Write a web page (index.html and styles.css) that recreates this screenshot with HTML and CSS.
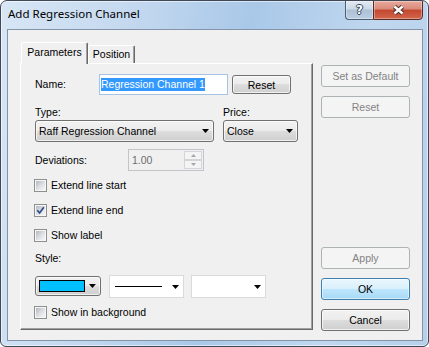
FILE: index.html
```html
<!DOCTYPE html>
<html>
<head>
<meta charset="utf-8">
<title>Add Regression Channel</title>
<link rel="stylesheet" href="styles.css">
</head>
<body>
<div class="window">
  <div class="titlebar">
    <div class="title">Add Regression Channel</div>
    <div class="caption-btns">
      <div class="cbtn help">?</div>
      <div class="cbtn close">
        <svg width="13" height="10" viewBox="0 0 13 10"><path d="M2.5 1.5L10.5 8.5M10.5 1.5L2.5 8.5" stroke="#4a2a24" stroke-width="4.4"/><path d="M2.5 1.5L10.5 8.5M10.5 1.5L2.5 8.5" stroke="#fff" stroke-width="2.4"/></svg>
      </div>
    </div>
  </div>
  <div class="client">
    <div class="main">
      <div class="tabs">
        <div class="tab active">Parameters</div>
        <div class="tab inactive">Position</div>
      </div>
      <div class="panel">
        <div class="row r-name">
          <span class="lbl l-name">Name:</span>
          <div class="textbox"><span class="sel">Regression Channel 1</span></div>
          <div class="btn b-reset">Reset</div>
        </div>
        <div class="grid-type">
          <span class="lbl">Type:</span>
          <span class="lbl">Price:</span>
          <div class="combo"><span class="ctext">Raff Regression Channel</span><svg width="7" height="4" viewBox="0 0 7 4"><path d="M0 0H7L3.5 4Z"/></svg></div>
          <div class="combo"><span class="ctext">Close</span><svg width="7" height="4" viewBox="0 0 7 4"><path d="M0 0H7L3.5 4Z"/></svg></div>
        </div>
        <div class="row r-dev">
          <span class="lbl l-dev">Deviations:</span>
          <div class="spin">
            <span class="val">1.00</span>
            <div class="spin-btns">
              <div class="sbtn"><svg width="5" height="3" viewBox="0 0 5 3"><path d="M0 3H5L2.5 0Z"/></svg></div>
              <div class="sbtn"><svg width="5" height="3" viewBox="0 0 5 3"><path d="M0 0H5L2.5 3Z"/></svg></div>
            </div>
          </div>
        </div>
        <div class="row chk r-c1"><span class="cb"><span class="cb-in"></span></span><span class="lbl">Extend line start</span></div>
        <div class="row chk r-c2"><span class="cb"><svg class="cb-in" viewBox="0 0 9 9"><path d="M1.3 4.3L3.6 7L7.8 1.2" fill="none" stroke="#2d4a8c" stroke-width="1.7"/></svg></span><span class="lbl">Extend line end</span></div>
        <div class="row chk r-c3"><span class="cb"><span class="cb-in"></span></span><span class="lbl">Show label</span></div>
        <div class="lbl r-style">Style:</div>
        <div class="row r-styles">
          <div class="combo c-color"><span class="swatch"></span><svg width="7" height="4" viewBox="0 0 7 4"><path d="M0 0H7L3.5 4Z"/></svg></div>
          <div class="lcombo"><span class="line"></span><svg width="7" height="4" viewBox="0 0 7 4"><path d="M0 0H7L3.5 4Z"/></svg></div>
          <div class="lcombo"><span class="blank"></span><svg width="7" height="4" viewBox="0 0 7 4"><path d="M0 0H7L3.5 4Z"/></svg></div>
        </div>
        <div class="row chk r-c4"><span class="cb"><span class="cb-in"></span></span><span class="lbl">Show in background</span></div>
      </div>
    </div>
    <div class="side">
      <div class="btn disabled">Set as Default</div>
      <div class="btn disabled s-gap">Reset</div>
      <div class="btn disabled s-apply">Apply</div>
      <div class="btn default s-gap">OK</div>
      <div class="btn s-gap">Cancel</div>
    </div>
  </div>
</div>
</body>
</html>
```
FILE: styles.css
```css
* { box-sizing: border-box; }
html, body { margin: 0; padding: 0; background: #fff; }
body {
  width: 429px; height: 347px; overflow: hidden;
  font-family: "Liberation Sans", Arial, sans-serif;
  font-size: 10.5px; color: #000;
}
.window {
  width: 429px; height: 347px;
  border: 1px solid #3e4857;
  border-radius: 7px 7px 6px 6px;
  background: linear-gradient(100deg, #d8e6f5 0%, #c3d8ef 28%, #a9c8e8 52%, #c0d7ef 78%, #b6d0eb 100%);
  box-shadow: inset 0 0 0 1px rgba(255,255,255,0.55);
  display: flex; flex-direction: column;
  overflow: hidden;
}
.titlebar {
  height: 28px; flex-shrink: 0;
  display: flex; justify-content: space-between; align-items: flex-start;
}
.title {
  font-family: "Noto Sans", "Liberation Sans", sans-serif;
  font-size: 11.5px; line-height: 16px;
  padding: 5px 0 0 7px;
}
.caption-btns { display: flex; margin: -1px 5px 0 0; }
.cbtn {
  height: 20px; display: flex; align-items: center; justify-content: center;
  border: 1px solid #4d5e72;
  box-shadow: inset 0 0 0 1px rgba(255,255,255,0.35);
}
.help {
  width: 28px; border-right: none; border-radius: 0 0 0 4px;
  background: linear-gradient(#e2eaf3 0%, #cbd8e6 45%, #acc0d6 50%, #bccee1 100%);
  color: #fff; font-family: "DejaVu Sans", sans-serif; font-weight: bold; font-size: 12px;
  text-shadow: 1px 0 #33475e, -1px 0 #33475e, 0 1px #33475e, 0 -1px #33475e;
}
.close {
  width: 50px; border-radius: 0 0 4px 0; border-color: #5a2b25;
  background: linear-gradient(#e7aa9d 0%, #d98a79 45%, #c4472f 50%, #d2664c 100%);
}
.client {
  flex: 1;
  margin: 0 5px 5px 6px;
  border: 1px solid #8394a8;
  background: #f0f0f0;
  display: flex;
}
.main {
  width: 305px;
  padding: 12px 0 10px 12px;
  display: flex; flex-direction: column;
}
.tabs { height: 21px; display: flex; align-items: flex-end; padding-left: 1px; }
.tab {
  border: 1px solid; border-bottom: none;
  border-color: #fff #696969 transparent #fff;
  border-radius: 2px 2px 0 0;
  box-shadow: inset -1px 0 0 #a0a0a0;
  text-align: center;
  background: #f0f0f0;
}
.tab.active { width: 67px; height: 22px; line-height: 19px; margin-bottom: -1px; position: relative; z-index: 1; }
.tab.inactive { width: 47px; height: 18px; line-height: 17px; }
.panel {
  width: 293px; height: 267px;
  border: 1px solid; border-color: #fff #696969 #696969 #fff;
  box-shadow: inset -1px -1px 0 #a0a0a0;
  padding: 10px 0 0 14px;
  display: flex; flex-direction: column; align-items: flex-start;
}
.lbl { line-height: 13px; white-space: nowrap; }
.row { display: flex; align-items: center; }
.l-name { width: 64px; }
.textbox {
  width: 129px; height: 21px; padding: 0 1px;
  border: 1px solid #a7c3e3; background: #fff;
  display: flex; align-items: center;
}
.sel { background: #3399ff; color: #fff; line-height: 13px; }
.btn {
  height: 22px;
  border: 1px solid #707070; border-radius: 3px;
  background: linear-gradient(#f2f2f2 0%, #ebebeb 50%, #dddddd 50%, #cfcfcf 100%);
  box-shadow: inset 0 0 0 1px rgba(255,255,255,0.7);
  display: flex; align-items: center; justify-content: center;
}
.b-reset { width: 59px; height: 19px; margin-left: 4px; }
.btn.disabled { border-color: #adb2b5; background: #f4f4f4; color: #838383; box-shadow: none; }
.btn.default {
  border-color: #3c7fb1;
  background: linear-gradient(#eaf6fd 0%, #d9f0fc 50%, #bee6fd 50%, #a7d9f5 100%);
  box-shadow: inset 0 0 0 1px rgba(255,255,255,0.5);
}
.grid-type {
  margin-top: 11px;
  display: grid; grid-template-columns: 179px 75px; column-gap: 9px; row-gap: 1px;
}
.combo {
  height: 22px;
  border: 1px solid #707070; border-radius: 3px;
  background: linear-gradient(#f2f2f2 0%, #ebebeb 50%, #dddddd 50%, #cfcfcf 100%);
  box-shadow: inset 0 0 0 1px rgba(255,255,255,0.7);
  display: flex; align-items: center; padding: 0 4px 0 3px;
}
.ctext { flex: 1; white-space: nowrap; }
.r-dev { margin-top: 7px; }
.l-dev { width: 93px; }
.spin {
  width: 76px; height: 22px;
  border: 1px solid #c2c4c7; background: #f0f0f0;
  display: flex; padding: 1px;
}
.val { flex: 1; color: #6d6d6d; padding-left: 2px; line-height: 18px; }
.spin-btns { width: 18px; display: flex; flex-direction: column; }
.sbtn {
  flex: 1; border: 1px solid #d3d5d8; background: #f4f4f4;
  display: flex; align-items: center; justify-content: center;
}
.sbtn svg { fill: #a5a7aa; }
.chk { margin-left: -1px; }
.cb {
  width: 13px; height: 13px; margin-right: 4px;
  border: 1px solid #8e8f8f; padding: 1px; background: #f6f6f6;
  display: flex;
}
.cb-in {
  display: block; width: 9px; height: 9px;
  background: linear-gradient(135deg, #b3b8bf 0%, #dfe1e4 55%, #f7f7f7 100%);
}
.r-c1 { margin-top: 8px; }
.r-c2 { margin-top: 12px; }
.r-c3 { margin-top: 12px; }
.r-style { margin-top: 10px; }
.r-styles { margin-top: 10px; align-items: flex-start; }
.c-color { width: 66px; height: 20px; margin-top: 1px; }
.swatch { width: 47px; height: 12px; border: 1px solid #000; background: #00bfff; margin-right: 4px; }
.lcombo {
  width: 75px; height: 23px; margin-left: 8px;
  border: 1px solid #dadada; background: #fff;
  display: flex; align-items: center; justify-content: space-between;
  padding: 0 4px 0 5px;
}
.lcombo + .lcombo { margin-left: 7px; }
.line { width: 47px; height: 1px; background: #000; }
.r-c4 { margin-top: 8px; }
.side {
  width: 89px; margin-left: 8px;
  padding: 35px 0 9px;
  display: flex; flex-direction: column;
}
.s-gap { margin-top: 9px; }
.s-apply { margin-top: auto; }
```
